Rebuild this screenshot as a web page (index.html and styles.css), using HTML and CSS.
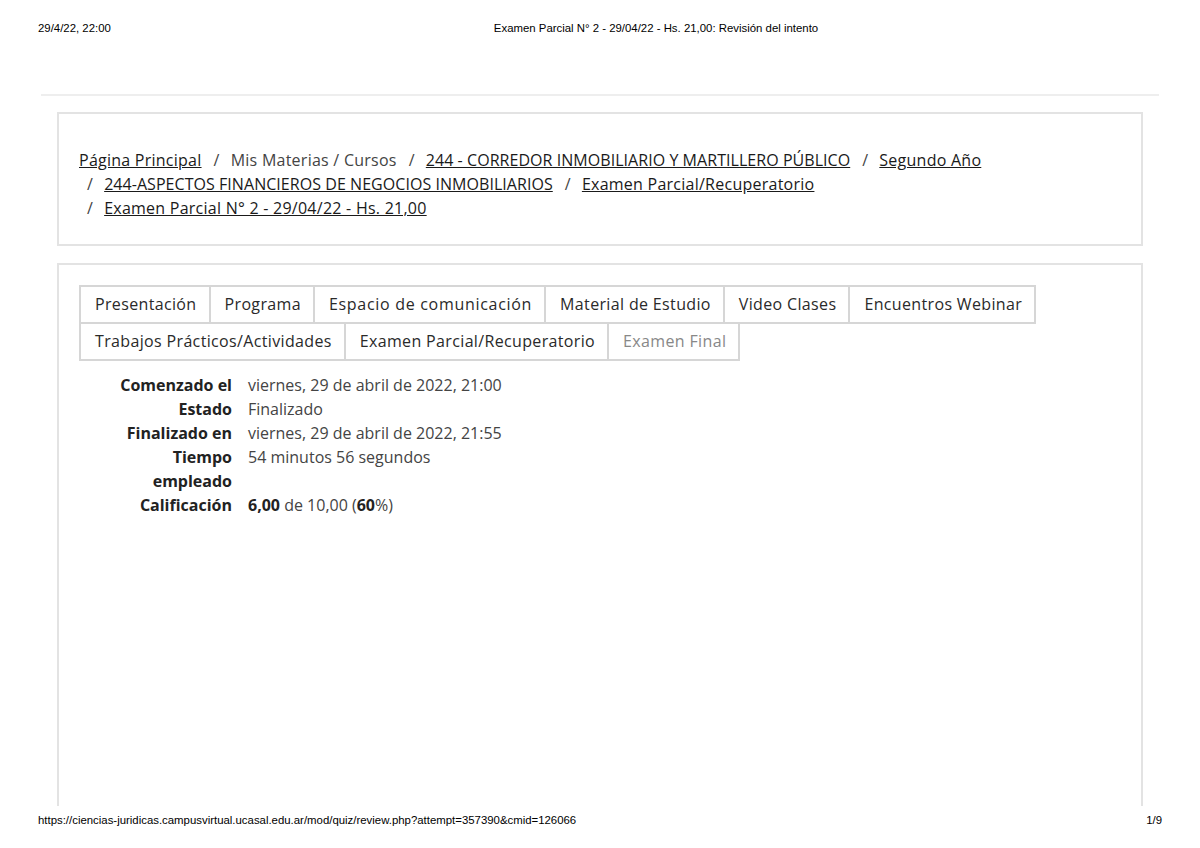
FILE: index.html
```html
<!DOCTYPE html>
<html lang="es">
<head>
<meta charset="utf-8">
<title>Examen Parcial N° 2 - 29/04/22 - Hs. 21,00: Revisión del intento</title>
<link rel="stylesheet" href="styles.css">
</head>
<body>
<div class="sheet">
  <header class="print-head">
    <span class="print-date">29/4/22, 22:00</span>
    <span class="print-title">Examen Parcial N° 2 - 29/04/22 - Hs. 21,00: Revisión del intento</span>
  </header>
  <div class="content">
    <div class="rule"></div>
    <nav class="box crumbs">
      <a href="#">Página Principal</a><span class="sep">/</span><span class="plain">Mis Materias / Cursos</span><span class="sep">/</span><a href="#" class="caps">244 - CORREDOR INMOBILIARIO Y MARTILLERO PÚBLICO</a><span class="sep">/</span><a href="#">Segundo Año</a><br>
      <span class="sep first">/</span><a href="#" class="caps">244-ASPECTOS FINANCIEROS DE NEGOCIOS INMOBILIARIOS</a><span class="sep">/</span><a href="#">Examen Parcial/Recuperatorio</a><br>
      <span class="sep first">/</span><a href="#">Examen Parcial N° 2 - 29/04/22 - Hs. 21,00</a>
    </nav>
    <main class="box main">
      <ul class="tabs">
        <li class="tab">Presentación</li>
        <li class="tab">Programa</li>
        <li class="tab wide">Espacio de comunicación</li>
        <li class="tab">Material de Estudio</li>
        <li class="tab">Video Clases</li>
        <li class="tab">Encuentros Webinar</li>
        <li class="tab">Trabajos Prácticos/Actividades</li>
        <li class="tab">Examen Parcial/Recuperatorio</li>
        <li class="tab muted">Examen Final</li>
      </ul>
      <div class="summary">
        <div class="label">Comenzado el</div><div class="value">viernes, 29 de abril de 2022, 21:00</div>
        <div class="label">Estado</div><div class="value">Finalizado</div>
        <div class="label">Finalizado en</div><div class="value">viernes, 29 de abril de 2022, 21:55</div>
        <div class="label">Tiempo empleado</div><div class="value">54 minutos 56 segundos</div>
        <div class="label">Calificación</div><div class="value"><b>6,00</b> de 10,00 (<b>60</b>%)</div>
      </div>
    </main>
  </div>
  <footer class="print-foot">
    <span>https://ciencias-juridicas.campusvirtual.ucasal.edu.ar/mod/quiz/review.php?attempt=357390&amp;cmid=126066</span>
    <span>1/9</span>
  </footer>
</div>
</body>
</html>
```

FILE: styles.css
```css
html, body {
  margin: 0;
  padding: 0;
  background: #fff;
}

.sheet {
  width: 1200px;
  height: 848px;
  overflow: hidden;
  display: flex;
  flex-direction: column;
}

.print-head,
.print-foot {
  font-family: "Liberation Sans", Arial, sans-serif;
  font-size: 11.4px;
  color: #000;
  display: flex;
  padding: 0 38px;
  line-height: 14px;
}

.print-head {
  padding-top: 21px;
  height: 14px;
}

.print-title {
  margin-left: 383px;
}

.print-foot {
  justify-content: space-between;
  padding-top: 7px;
}

.content {
  overflow: hidden;
  padding: 59px 57px 0 41px;
  box-sizing: border-box;
  height: 771px;
  flex: none;
  font-family: "Open Sans", sans-serif;
  font-size: 16px;
  color: #222;
}

.rule {
  height: 2px;
  background: #eeeeee;
  margin-right: -16px;
}

.box {
  border: 2px solid #e3e3e3;
  margin-left: 16px;
}

.crumbs {
  margin-top: 16px;
  padding: 34px 20px 24px 20px;
  line-height: 24px;
  color: #444;
  height: 72px;
  letter-spacing: 0.25px;
}

.crumbs a {
  color: #1a1a1a;
  text-decoration: underline;
}

.crumbs .caps {
  letter-spacing: 0.05px;
}

.crumbs .sep {
  margin: 0 11px 0 12px;
}

.crumbs .sep.first {
  margin-left: 8px;
}

.main {
  margin-top: 17px;
  padding: 20px 20px 0 20px;
  height: 600px;
}

.tabs {
  list-style: none;
  margin: 0;
  padding: 0 0 0 2px;
  display: flex;
  flex-wrap: wrap;
  width: 1000px;
}

.tab {
  border: 2px solid #d6d6d6;
  margin: 0 0 -2px -2px;
  padding: 8px 12px 8px 14px;
  line-height: 19px;
  color: #2a2a2a;
  letter-spacing: 0.35px;
}

.tab.wide {
  letter-spacing: 0.7px;
}

.tab.muted {
  color: #888;
}

.summary {
  display: grid;
  grid-template-columns: 135px 1fr;
  column-gap: 16px;
  padding-left: 18px;
  margin-top: 14px;
  line-height: 24px;
}

.label {
  font-weight: bold;
  text-align: right;
  color: #222;
}

.value {
  color: #444;
}

.value b {
  color: #222;
}
```
